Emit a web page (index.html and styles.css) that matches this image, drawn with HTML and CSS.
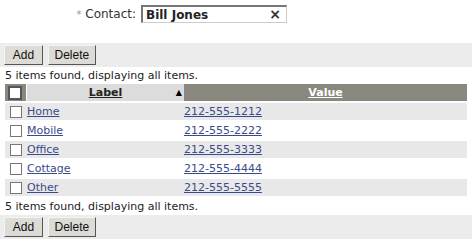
FILE: index.html
```html
<html><head>
    <title>Contact Numbers</title>
    <link rel="stylesheet" href="styles.css">
</head>
<body>
    <div class="contact-row">
        <label class="contact-label" for="contact"><span class="req">*</span> Contact:</label>
        <div class="contact-input">
            <input type="text" id="contact" value="Bill Jones">
            <span class="clear">&times;</span>
        </div>
    </div>

    <div class="button-bar">
        <input type="button" value="Add">
        <input type="button" value="Delete">
    </div>
    <p class="status">5 items found, displaying all items.</p>

    <table class="items">
        <thead>
            <tr>
                <th class="sel"><span class="box"></span></th>
                <th class="label-col"><a href="#">Label</a><span class="sort">&#9650;</span></th>
                <th class="value-col"><a href="#">Value</a></th>
            </tr>
        </thead>
        <tbody>
            <tr><td class="sel"><span class="box"></span></td><td><a href="#">Home</a></td><td><a href="#">212-555-1212</a></td></tr>
            <tr><td class="sel"><span class="box"></span></td><td><a href="#">Mobile</a></td><td><a href="#">212-555-2222</a></td></tr>
            <tr><td class="sel"><span class="box"></span></td><td><a href="#">Office</a></td><td><a href="#">212-555-3333</a></td></tr>
            <tr><td class="sel"><span class="box"></span></td><td><a href="#">Cottage</a></td><td><a href="#">212-555-4444</a></td></tr>
            <tr><td class="sel"><span class="box"></span></td><td><a href="#">Other</a></td><td><a href="#">212-555-5555</a></td></tr>
        </tbody>
    </table>

    <p class="status">5 items found, displaying all items.</p>
    <div class="button-bar bottom">
        <input type="button" value="Add">
        <input type="button" value="Delete">
    </div>
</body></html>
```

FILE: styles.css
```css
body {
    font-family: "DejaVu Sans", Verdana, sans-serif;
    font-size: 11px;
    color: #222;
    background: #fff;
    margin: 0;
    padding: 0;
}

.contact-row {
    display: flex;
    align-items: center;
    height: 26px;
    padding-top: 1px;
}

.contact-label {
    width: 136px;
    text-align: right;
    padding-right: 5px;
    font-size: 12px;
    color: #333;
}

.req {
    color: #999;
    font-size: 10px;
}

.contact-input {
    position: relative;
    width: 146px;
}

.contact-input input {
    width: 146px;
    height: 18px;
    padding: 0 18px 0 3px;
    box-sizing: border-box;
    border: 1px solid #ccc;
    border-top: 2px solid #777;
    border-left: 2px solid #777;
    font-family: "DejaVu Sans", Verdana, sans-serif;
    font-size: 12px;
    font-weight: bold;
    color: #222;
}

.clear {
    position: absolute;
    right: 6px;
    top: 1px;
    font-size: 14px;
    font-weight: bold;
    color: #333;
}

.button-bar {
    background: #ececec;
    margin: 16px 2px 0 0;
    padding: 2px 4px;
    height: 20px;
}

.button-bar.bottom {
    margin-top: 2px;
}

.button-bar input {
    font-family: "Liberation Sans", Arial, sans-serif;
    font-size: 12px;
    color: #111;
    background: #dddbd6;
    border: 1px solid;
    border-color: #f4f4f4 #555 #555 #f4f4f4;
    padding: 0 6px;
    min-width: 39px;
    height: 20px;
    margin: 0 1px 0 0;
}

.status {
    margin: 2px 0 0 5px;
    font-size: 11px;
    line-height: 13px;
    color: #222;
}

.items {
    border-collapse: separate;
    border-spacing: 0 2px;
    margin: 0 0 0 5px;
    width: 462px;
    font-size: 11px;
}

.items th, .items td {
    padding: 0;
    height: 17px;
    text-align: left;
}

.items a {
    color: #3a4a8a;
}

.items th a {
    color: #222;
}

.items tbody tr:nth-child(odd) td {
    background: #e8e8e8;
}

.sel {
    width: 21px;
}

.items th.sel {
    background: #8a877e;
    border-right: 1px solid #fff;
}

.box {
    display: block;
    width: 10px;
    height: 10px;
    margin-left: 5px;
    border: 1px solid #777;
    background: #fff;
}

.items th .box {
    border: 2px solid #555;
    margin-left: 3px;
    width: 10px;
    height: 10px;
}

.label-col {
    width: 157px;
    background: #dcdcdc;
    text-align: center !important;
    position: relative;
}

.sort {
    position: absolute;
    right: 2px;
    top: 4px;
    font-size: 8px;
    color: #000;
}

.value-col {
    background: #8a877e;
    text-align: center !important;
}

.value-col a {
    color: #fff !important;
}
```
